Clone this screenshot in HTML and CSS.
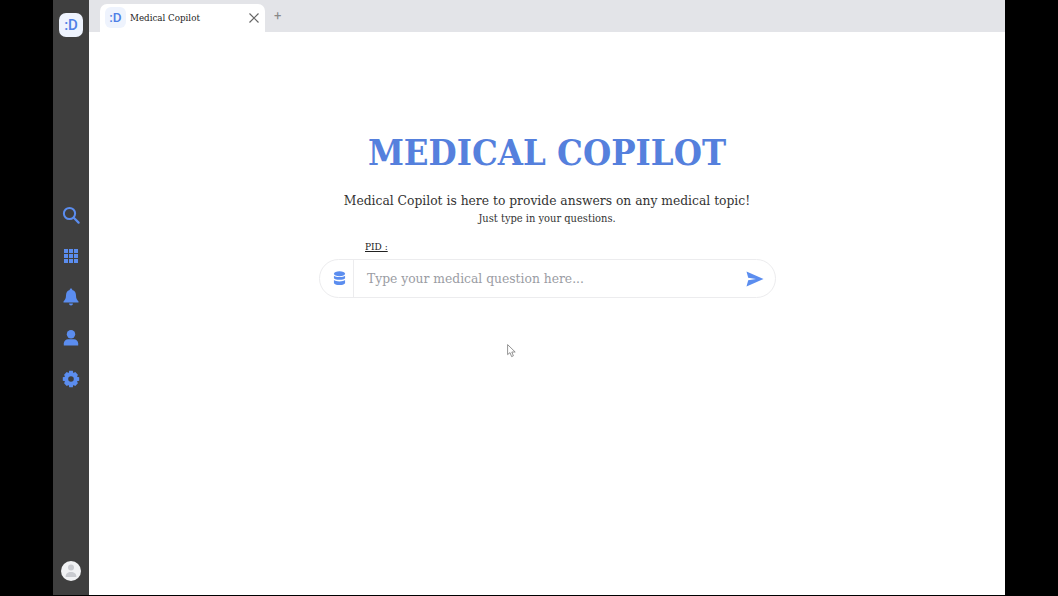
FILE: index.html
```html
<!DOCTYPE html>
<html>
<head>
    <meta charset="utf-8">
    <title>Medical Copilot</title>
    <link rel="stylesheet" href="styles.css">
</head>
<body>
    <div class="app">
        <div class="sidebar">
            <div class="logo">:D</div>
            <div class="nav">
                <svg class="nav-icon" viewBox="0 0 18 18"><circle cx="7.5" cy="7.5" r="5.6" fill="none" stroke="#5b8def" stroke-width="2"/><path d="M11.8 11.8 L16.6 16.6" stroke="#5b8def" stroke-width="2.2" stroke-linecap="round"/></svg>
                <svg class="nav-icon" viewBox="0 0 18 18" fill="#5b8def"><rect x="2" y="2" width="4" height="4"/><rect x="7" y="2" width="4" height="4"/><rect x="12" y="2" width="4" height="4"/><rect x="2" y="7" width="4" height="4"/><rect x="7" y="7" width="4" height="4"/><rect x="12" y="7" width="4" height="4"/><rect x="2" y="12" width="4" height="4"/><rect x="7" y="12" width="4" height="4"/><rect x="12" y="12" width="4" height="4"/></svg>
                <svg class="nav-icon" viewBox="0 0 18 18" fill="#5b8def"><path d="M9 0.5 a1.3 1.3 0 0 1 1.3 1.4 C13 2.5 14 4.8 14 7.5 C14 10.5 15 12 16.5 13.5 V14.5 H1.5 V13.5 C3 12 4 10.5 4 7.5 C4 4.8 5 2.5 7.7 1.9 A1.3 1.3 0 0 1 9 0.5 Z"/><path d="M7 15.5 H11 A2 2 0 0 1 7 15.5 Z"/></svg>
                <svg class="nav-icon" viewBox="0 0 18 18" fill="#5b8def"><circle cx="9" cy="5.2" r="4.2"/><path d="M1.8 16.5 V14.5 C1.8 11.8 4 10.2 6 10.2 H12 C14 10.2 16.2 11.8 16.2 14.5 V16.5 Z"/></svg>
                <svg class="nav-icon" viewBox="0 0 18 18"><path fill="#5b8def" fill-rule="evenodd" d="M7.2 0.8 H10.8 L11.3 3 L13.3 2.1 L15.9 4.7 L15 6.7 L17.2 7.2 V10.8 L15 11.3 L15.9 13.3 L13.3 15.9 L11.3 15 L10.8 17.2 H7.2 L6.7 15 L4.7 15.9 L2.1 13.3 L3 11.3 L0.8 10.8 V7.2 L3 6.7 L2.1 4.7 L4.7 2.1 L6.7 3 Z M9 6.2 A2.8 2.8 0 1 0 9 11.8 A2.8 2.8 0 1 0 9 6.2 Z"/></svg>
            </div>
            <div class="avatar">
                <svg viewBox="0 0 20 20" fill="#c9cbd0"><circle cx="10" cy="6.6" r="3"/><path d="M4.6 16 C4.6 12.4 7 11 10 11 C13 11 15.4 12.4 15.4 16 Z"/></svg>
            </div>
        </div>
        <div class="window">
            <div class="tabbar">
                <div class="tab">
                    <span class="tab-logo">:D</span>
                    <span class="tab-title">Medical Copilot</span>
                    <svg class="tab-close" viewBox="0 0 10 10"><path d="M0.5 0.5 L9.5 9.5 M9.5 0.5 L0.5 9.5" stroke="#666" stroke-width="1.2" fill="none"/></svg>
                </div>
                <span class="tab-add">+</span>
            </div>
            <div class="content">
                <h1 class="title">MEDICAL COPILOT</h1>
                <p class="lead">Medical Copilot is here to provide answers on any medical topic!</p>
                <p class="sub">Just type in your questions.</p>
                <div class="form">
                    <div class="pid">PID :</div>
                    <div class="ask">
                        <div class="ask-db">
                            <svg viewBox="0 0 14 16" fill="#5b8def"><ellipse cx="7" cy="2.9" rx="6" ry="2.6"/><path d="M1 5 C2.5 7 11.5 7 13 5 V7.8 C11.5 10 2.5 10 1 7.8 Z"/><path d="M1 9.6 C2.5 11.6 11.5 11.6 13 9.6 V13 C11.5 15.8 2.5 15.8 1 13 Z"/></svg>
                        </div>
                        <div class="ask-input">Type your medical question here...</div>
                        <svg class="ask-send" viewBox="0 0 18 16" fill="#5b8def"><path d="M0.5 0.5 L17.5 8 L0.5 15.5 L2.2 9.3 L10 8 L2.2 6.7 Z"/></svg>
                    </div>
                </div>
                <svg class="cursor" viewBox="0 0 10 14"><path d="M0.6 0.6 V10.6 L3 8.6 L4.6 12.6 L6.4 11.8 L4.8 8 H8.2 Z" fill="#fff" stroke="#777" stroke-width="0.8"/></svg>
            </div>
        </div>
    </div>
</body>
</html>
```

FILE: styles.css
```css
html, body {
    margin: 0;
    padding: 0;
    height: 100%;
    background: #000;
    overflow: hidden;
}

.app {
    display: flex;
    width: 952px;
    height: 595px;
    margin-left: 53px;
    font-family: "DejaVu Serif Condensed", "DejaVu Serif", serif;
}

.sidebar {
    width: 36px;
    flex: none;
    background: #3f3f3f;
    display: flex;
    flex-direction: column;
    align-items: center;
    padding-top: 13px;
    padding-bottom: 14px;
    box-sizing: border-box;
}

.logo {
    width: 24px;
    height: 24px;
    border-radius: 7px;
    background: #eef3fd;
    color: #4f80e6;
    font: 500 15px/24px "Roboto", sans-serif;
    text-align: center;
}

.nav {
    margin-top: 169px;
    display: flex;
    flex-direction: column;
    gap: 23px;
}

.nav-icon {
    display: block;
    width: 18px;
    height: 18px;
}

.avatar {
    margin-top: auto;
    width: 20px;
    height: 20px;
    border-radius: 50%;
    background: #f1f2f4;
}

.avatar svg {
    display: block;
}

.window {
    flex: 1;
    display: flex;
    flex-direction: column;
    background: #fff;
}

.tabbar {
    height: 32px;
    flex: none;
    background: #e3e4e8;
    display: flex;
    align-items: flex-end;
    padding-left: 11px;
}

.tab {
    width: 165px;
    height: 28px;
    box-sizing: border-box;
    background: #fff;
    border-radius: 7px 7px 0 0;
    display: flex;
    align-items: center;
    padding: 0 6px 0 5px;
}

.tab-logo {
    width: 21px;
    height: 21px;
    margin-bottom: 2px;
    border-radius: 6px;
    background: #eef3fd;
    color: #4f80e6;
    font: 500 13.5px/21px "Roboto", sans-serif;
    text-align: center;
}

.tab-title {
    margin-left: 4px;
    margin-bottom: 1px;
    font-size: 9.7px;
    color: #222;
    flex: 1;
}

.tab-close {
    width: 10px;
    height: 10px;
    margin-bottom: 1px;
}

.tab-add {
    align-self: flex-start;
    margin: 9px 0 0 9px;
    font: 13px/14px "Roboto", sans-serif;
    color: #888;
}

.content {
    flex: 1;
    position: relative;
    display: flex;
    flex-direction: column;
    align-items: center;
}

.title {
    margin: 96px 0 0;
    font-size: 36.1px;
    line-height: 50px;
    font-weight: bold;
    color: #5580dd;
}

.lead {
    margin: 13px 0 0;
    font-size: 13.7px;
    line-height: 19px;
    color: #333;
}

.sub {
    margin: 1px 0 0;
    font-size: 11px;
    line-height: 16px;
    color: #333;
}

.form {
    width: 458px;
    margin-top: 13px;
}

.pid {
    margin-left: 47px;
    font-size: 10px;
    line-height: 14px;
    color: #222;
    text-decoration: underline;
}

.ask {
    margin-top: 5px;
    margin-left: 1px;
    height: 39px;
    box-sizing: border-box;
    border: 1px solid #ececee;
    border-radius: 20px;
    display: flex;
    align-items: center;
}

.ask-db {
    width: 34px;
    height: 100%;
    flex: none;
    border-right: 1px solid #ececee;
    display: flex;
    align-items: center;
    justify-content: center;
    padding-left: 5px;
    box-sizing: border-box;
}

.ask-db svg {
    width: 13px;
    height: 15px;
}

.ask-input {
    flex: 1;
    padding-left: 13px;
    padding-bottom: 2px;
    font-size: 13.7px;
    color: #9a9ca3;
}

.ask-send {
    width: 18px;
    height: 16px;
    margin-right: 11px;
}

.cursor {
    position: absolute;
    left: 418px;
    top: 312px;
    width: 10px;
    height: 14px;
}
```
